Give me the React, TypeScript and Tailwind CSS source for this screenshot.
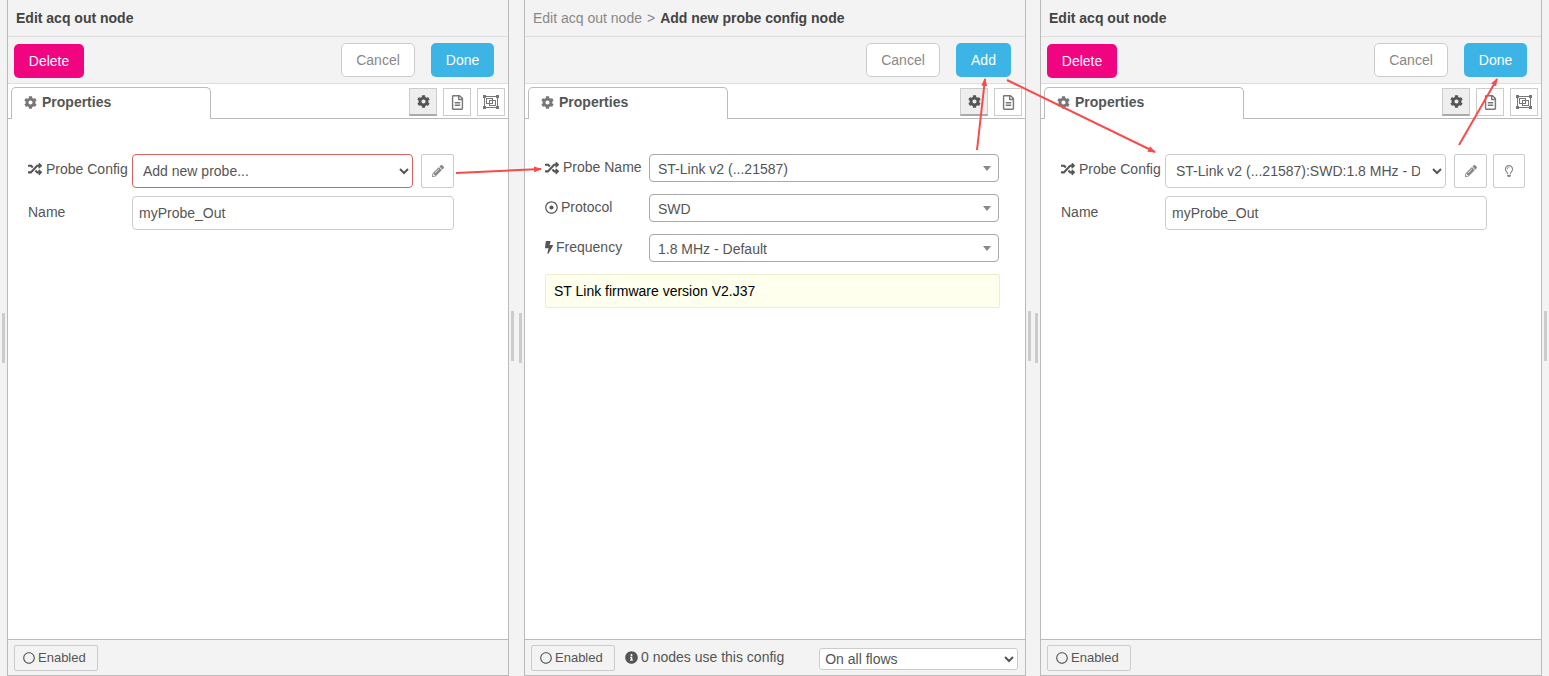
import type { ReactNode } from 'react';
import { FaBolt, FaCog, FaInfoCircle, FaPencilAlt, FaRandom, FaRegCircle, FaRegDotCircle, FaRegFileAlt, FaRegLightbulb } from 'react-icons/fa';

function Handle({ className = '' }: { className?: string }) {
  return <div className={`h-[50px] w-[3px] bg-[#cccccc] ${className}`} />;
}

function GroupIcon() {
  return (
    <svg width="16" height="14" viewBox="0 0 16 14" fill="none" stroke="#777777">
      <rect x="1.5" y="1.5" width="13" height="11" />
      <rect x="3.5" y="3.5" width="6" height="5" />
      <rect x="6.5" y="5.5" width="6" height="5" />
      <g fill="#777777" stroke="none">
        <rect width="3" height="3" />
        <rect x="13" width="3" height="3" />
        <rect y="11" width="3" height="3" />
        <rect x="13" y="11" width="3" height="3" />
      </g>
    </svg>
  );
}

function TabBar({ group = true }: { group?: boolean }) {
  return (
    <div className="flex h-[35px] shrink-0 items-start justify-between border-b border-[#bbbbbb] bg-white pl-[3px] pr-[3px]">
      <div className="mt-[3px] flex h-[32px] w-[200px] items-center gap-[5px] rounded-t-[5px] border border-b-0 border-[#bbbbbb] bg-white pb-[2px] pl-[12px] text-[14px] font-bold text-[#555555]">
        <FaCog className="text-[13px] text-[#777777]" />
        Properties
      </div>
      <div className="mt-[4px] flex gap-[6px]">
        <div className="flex h-[28px] w-[28px] items-center justify-center border border-b-2 border-[#cccccc] border-b-[#aaaaaa] bg-[#eeeeee] text-[13px] text-[#555555]">
          <FaCog />
        </div>
        <div className="flex h-[28px] w-[28px] items-center justify-center border border-[#cccccc] bg-white text-[15px] text-[#777777]">
          <FaRegFileAlt />
        </div>
        {group && (
          <div className="flex h-[28px] w-[28px] items-center justify-center border border-[#cccccc] bg-white">
            <GroupIcon />
          </div>
        )}
      </div>
    </div>
  );
}

function Footer({ children }: { children?: ReactNode }) {
  return (
    <div className="flex h-[37px] shrink-0 items-start border-y border-[#bbbbbb] bg-[#f3f3f3] pl-[6px] text-[14px] text-[#555555]">
      <div className="mt-[5px] flex h-[26px] w-[84px] items-center gap-[3px] rounded-[2px] border border-[#cccccc] bg-[#f3f3f3] pl-[8px] text-[13px]">
        <FaRegCircle className="text-[12px]" />
        Enabled
      </div>
      {children}
    </div>
  );
}

function PrimaryButton({ label, width }: { label: string; width: string }) {
  return (
    <div className={`flex h-[34px] items-center justify-center rounded-[5px] bg-[#3cb4e6] text-[14px] text-white ${width}`}>{label}</div>
  );
}

function CancelButton() {
  return (
    <div className="flex h-[34px] w-[74px] items-center justify-center rounded-[5px] border border-[#cccccc] bg-white text-[14px] text-[#888888]">Cancel</div>
  );
}

function SquareButton({ children, width = 'w-[33px]' }: { children: ReactNode; width?: string }) {
  return (
    <div className={`flex h-[34px] items-center justify-center rounded-[2px] border border-[#cccccc] bg-white text-[12px] text-[#888888] ${width}`}>{children}</div>
  );
}

function NodeForm({ value, error, extra }: { value: string; error?: boolean; extra?: boolean }) {
  return (
    <div className="flex flex-1 flex-col gap-[8px] pl-[20px] pt-[35px] text-[14px] text-[#555555]">
      <div className="flex items-center">
        <div className="flex w-[104px] items-center gap-[4px] overflow-hidden whitespace-nowrap pb-[4px]">
          <FaRandom className="shrink-0 text-[14px] text-[#555555]" />
          Probe Config
        </div>
        <select
          defaultValue={value}
          className={`h-[34px] w-[281px] rounded-[4px] border bg-white pl-[6px] pr-[9px] text-[14px] text-[#555555] ${error ? 'border-[#d6615f]' : 'border-[#cccccc]'}`}
        >
          <option>{value}</option>
        </select>
        <div className="ml-[8px] flex gap-[6px]">
          <SquareButton>
            <FaPencilAlt />
          </SquareButton>
          {extra && (
            <SquareButton width="w-[32px]">
              <FaRegLightbulb />
            </SquareButton>
          )}
        </div>
      </div>
      <div className="flex items-center">
        <div className="w-[104px] pb-[2px]">Name</div>
        <div className="flex h-[34px] w-[322px] items-center rounded-[4px] border border-[#cccccc] bg-white pl-[6px] pt-[1px]">myProbe_Out</div>
      </div>
    </div>
  );
}

function FakeSelect({ label, icon, value, gap }: { label: string; icon: ReactNode; value: string; gap: string }) {
  return (
    <div className="flex items-start">
      <div className={`flex w-[104px] items-center whitespace-nowrap pt-[3px] text-[#555555] ${gap}`}>
        {icon}
        {label}
      </div>
      <div className="flex h-[28px] w-[350px] items-center justify-between rounded-[4px] border border-[#aaaaaa] bg-white pl-[8px] pr-[6px] pt-[2px] text-[#555555]">
        {value}
        <svg width="8" height="5" viewBox="0 0 8 5" className="mb-[2px] mr-[1px]">
          <path d="M0 0h8L4 5z" fill="#888888" />
        </svg>
      </div>
    </div>
  );
}

function Panel({ title, toolbar, children }: { title: ReactNode; toolbar: ReactNode; children: ReactNode }) {
  return (
    <div className="flex h-full w-[502px] shrink-0 flex-col border-x border-[#bbbbbb] bg-white">
      <div className="flex h-[37px] shrink-0 items-center gap-[5px] border-b border-[#dddddd] bg-[#f3f3f3] pl-[8px] text-[14px] font-bold text-[#444444]">{title}</div>
      <div className="flex h-[47px] shrink-0 justify-between border-b border-[#dddddd] bg-[#f3f3f3] pl-[6px] pr-[14px] pt-[6px]">{toolbar}</div>
      {children}
    </div>
  );
}

function EditToolbar() {
  return (
    <>
      <div className="mt-[1px] flex h-[34px] w-[70px] items-center justify-center rounded-[5px] bg-[#f0047f] text-[14px] text-white">Delete</div>
      <div className="flex gap-[16px]">
        <CancelButton />
        <PrimaryButton label="Done" width="w-[63px]" />
      </div>
    </>
  );
}

function ConfigPanel() {
  return (
    <Panel
      title={
        <>
          <span className="font-normal text-[#888888]">Edit acq out node</span>
          <span className="font-normal text-[#888888]">&gt;</span>
          <span>Add new probe config node</span>
        </>
      }
      toolbar={
        <div className="ml-auto flex gap-[16px]">
          <CancelButton />
          <PrimaryButton label="Add" width="w-[55px]" />
        </div>
      }
    >
      <TabBar group={false} />
      <div className="flex flex-1 flex-col gap-[12px] pl-[20px] pt-[35px] text-[14px]">
        <FakeSelect label="Probe Name" gap="gap-[4px]" value="ST-Link v2 (...21587)" icon={<FaRandom className="text-[14px]" />} />
        <FakeSelect label="Protocol" gap="gap-[3px]" value="SWD" icon={<FaRegDotCircle className="text-[13px]" />} />
        <FakeSelect label="Frequency" gap="gap-[3px]" value="1.8 MHz - Default" icon={<FaBolt className="w-[8px] text-[13px]" />} />
        <div className="flex h-[34px] w-[455px] items-center rounded-[2px] border border-[#eeeecc] bg-[#ffffee] pl-[8px] text-black">ST Link firmware version V2.J37</div>
      </div>
      <Footer>
        <div className="ml-[10px] mt-[7px] flex items-center gap-[3px]">
          <FaInfoCircle className="text-[13px]" />
          0 nodes use this config
        </div>
        <select defaultValue="On all flows" className="ml-[35px] mt-[8px] h-[22px] w-[199px] rounded-[3px] border border-[#cccccc] bg-white pl-[1px] text-[14px] text-[#555555]">
          <option>On all flows</option>
        </select>
      </Footer>
    </Panel>
  );
}

// the red arrows were drawn over the screenshot, so they sit over everything
function Arrows() {
  const lines = [
    [456, 173, 541, 169],
    [977, 150, 985, 79],
    [1007, 80, 1155, 152],
    [1459, 145, 1497, 79],
  ];
  return (
    <svg className="pointer-events-none absolute inset-0" width="1549" height="676">
      <defs>
        <marker id="head" markerWidth="8" markerHeight="6" refX="7" refY="3" orient="auto" markerUnits="userSpaceOnUse">
          <path d="M0 0L8 3L0 6z" fill="#f94b4b" />
        </marker>
      </defs>
      {lines.map(([x1, y1, x2, y2]) => (
        <line key={x1} x1={x1} y1={y1} x2={x2} y2={y2} stroke="#f94b4b" strokeWidth="2" markerEnd="url(#head)" />
      ))}
    </svg>
  );
}

export default function App() {
  return (
    <div className="relative flex h-[676px] w-[1549px] overflow-hidden bg-[#f3f3f3] font-['Liberation_Sans',Arial,sans-serif]">
      <div className="flex w-[7px] shrink-0 items-center pl-[2px]">
        <Handle />
      </div>
      <Panel title="Edit acq out node" toolbar={<EditToolbar />}>
        <TabBar />
        <NodeForm value="Add new probe..." error />
        <Footer />
      </Panel>
      <div className="flex w-[15px] shrink-0 items-center gap-[5px] pl-[2px]">
        <Handle className="-translate-y-[2px]" />
        <Handle />
      </div>
      <ConfigPanel />
      <div className="flex w-[14px] shrink-0 items-center gap-[4px] pl-[2px]">
        <Handle className="-translate-y-[2px]" />
        <Handle />
      </div>
      <Panel title="Edit acq out node" toolbar={<EditToolbar />}>
        <TabBar />
        <NodeForm value="ST-Link v2 (...21587):SWD:1.8 MHz - Default" extra />
        <Footer />
      </Panel>
      <div className="flex w-[7px] shrink-0 items-center pl-[2px]">
        <Handle className="-translate-y-[2px]" />
      </div>
      <Arrows />
    </div>
  );
}
